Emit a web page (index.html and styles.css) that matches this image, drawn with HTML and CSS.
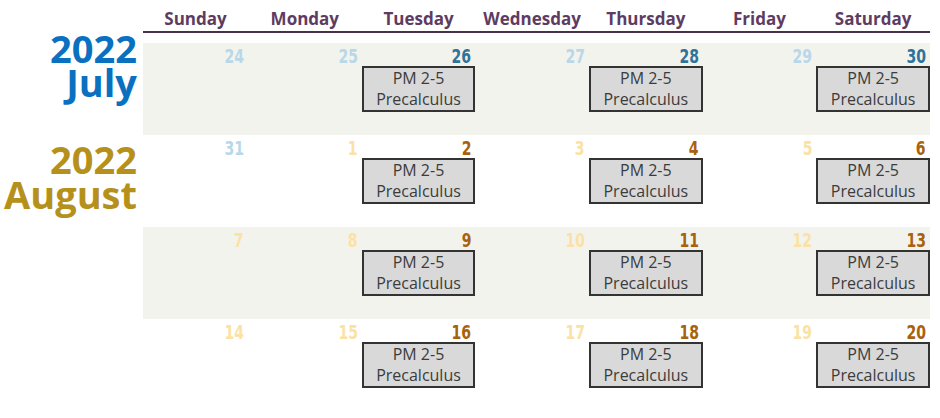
FILE: index.html
```html
<!DOCTYPE html>
<html>
<head>
<meta charset="utf-8">
<link rel="stylesheet" href="styles.css">
</head>
<body>
<div class="page">
  <aside class="labels">
    <div class="month july"><div>2022</div><div>July</div></div>
    <div class="month august"><div>2022</div><div>August</div></div>
  </aside>
  <main class="cal">
    <div class="head">
      <div>Sunday</div><div>Monday</div><div>Tuesday</div><div>Wednesday</div><div>Thursday</div><div>Friday</div><div>Saturday</div>
    </div>
    <div class="week shaded">
      <div class="cell"><span class="num jul-dim">24</span></div>
      <div class="cell"><span class="num jul-dim">25</span></div>
      <div class="cell"><span class="num jul">26</span><div class="event">PM 2-5<br>Precalculus</div></div>
      <div class="cell"><span class="num jul-dim">27</span></div>
      <div class="cell"><span class="num jul">28</span><div class="event">PM 2-5<br>Precalculus</div></div>
      <div class="cell"><span class="num jul-dim">29</span></div>
      <div class="cell"><span class="num jul">30</span><div class="event">PM 2-5<br>Precalculus</div></div>
    </div>
    <div class="week">
      <div class="cell"><span class="num jul-dim">31</span></div>
      <div class="cell"><span class="num aug-dim">1</span></div>
      <div class="cell"><span class="num aug">2</span><div class="event">PM 2-5<br>Precalculus</div></div>
      <div class="cell"><span class="num aug-dim">3</span></div>
      <div class="cell"><span class="num aug">4</span><div class="event">PM 2-5<br>Precalculus</div></div>
      <div class="cell"><span class="num aug-dim">5</span></div>
      <div class="cell"><span class="num aug">6</span><div class="event">PM 2-5<br>Precalculus</div></div>
    </div>
    <div class="week shaded">
      <div class="cell"><span class="num aug-dim">7</span></div>
      <div class="cell"><span class="num aug-dim">8</span></div>
      <div class="cell"><span class="num aug">9</span><div class="event">PM 2-5<br>Precalculus</div></div>
      <div class="cell"><span class="num aug-dim">10</span></div>
      <div class="cell"><span class="num aug">11</span><div class="event">PM 2-5<br>Precalculus</div></div>
      <div class="cell"><span class="num aug-dim">12</span></div>
      <div class="cell"><span class="num aug">13</span><div class="event">PM 2-5<br>Precalculus</div></div>
    </div>
    <div class="week">
      <div class="cell"><span class="num aug-dim">14</span></div>
      <div class="cell"><span class="num aug-dim">15</span></div>
      <div class="cell"><span class="num aug">16</span><div class="event">PM 2-5<br>Precalculus</div></div>
      <div class="cell"><span class="num aug-dim">17</span></div>
      <div class="cell"><span class="num aug">18</span><div class="event">PM 2-5<br>Precalculus</div></div>
      <div class="cell"><span class="num aug-dim">19</span></div>
      <div class="cell"><span class="num aug">20</span><div class="event">PM 2-5<br>Precalculus</div></div>
    </div>
  </main>
</div>
</body>
</html>
```
FILE: styles.css
```css
html, body {
  margin: 0;
  padding: 0;
  background: #ffffff;
}
.page {
  display: flex;
  width: 940px;
  height: 418px;
  overflow: hidden;
}
.labels {
  width: 143px;
  box-sizing: border-box;
  padding-right: 6px;
  text-align: right;
  font-family: "Open Sans", "Noto Sans", sans-serif;
  font-weight: 700;
  font-size: 38px;
  line-height: 34px;
}
.month.july {
  margin-top: 31px;
  color: #0a70c0;
}
.month.august {
  margin-top: 43px;
  color: #b5911c;
  line-height: 35px;
}
.cal {
  width: 787px;
}
.head {
  display: grid;
  grid-template-columns: 105px repeat(6, 1fr);
  height: 31px;
  border-bottom: 2px solid #46304d;
  font-family: "Open Sans", "Noto Sans", sans-serif;
  font-weight: 700;
  font-size: 17px;
  line-height: 37px;
  color: #5e3c62;
  text-align: center;
}
.week {
  display: grid;
  grid-template-columns: 105px repeat(6, 1fr);
  height: 92px;
}
.head + .week {
  margin-top: 10px;
}
.week.shaded {
  background: #f3f3ee;
}
.cell {
  display: flex;
  flex-direction: column;
  align-items: stretch;
  padding-top: 3px;
}
.num {
  align-self: flex-end;
  margin-right: 4px;
  font-family: "DejaVu Sans", sans-serif;
  font-stretch: condensed;
  font-weight: 700;
  font-size: 20px;
  line-height: 20px;
  transform: scaleX(0.78);
  transform-origin: right center;
}
.jul { color: #2f739b; }
.jul-dim { color: #b8d8ea; }
.aug { color: #a8620e; }
.aug-dim { color: #fbe2a4; }
.event {
  height: 46px;
  box-sizing: border-box;
  border: 2px solid #333333;
  background: #d9d9d9;
  color: #3c3c3c;
  font-family: "Open Sans", "Noto Sans", sans-serif;
  font-size: 16px;
  line-height: 21px;
  text-align: center;
  padding-top: 0px;
}
```
